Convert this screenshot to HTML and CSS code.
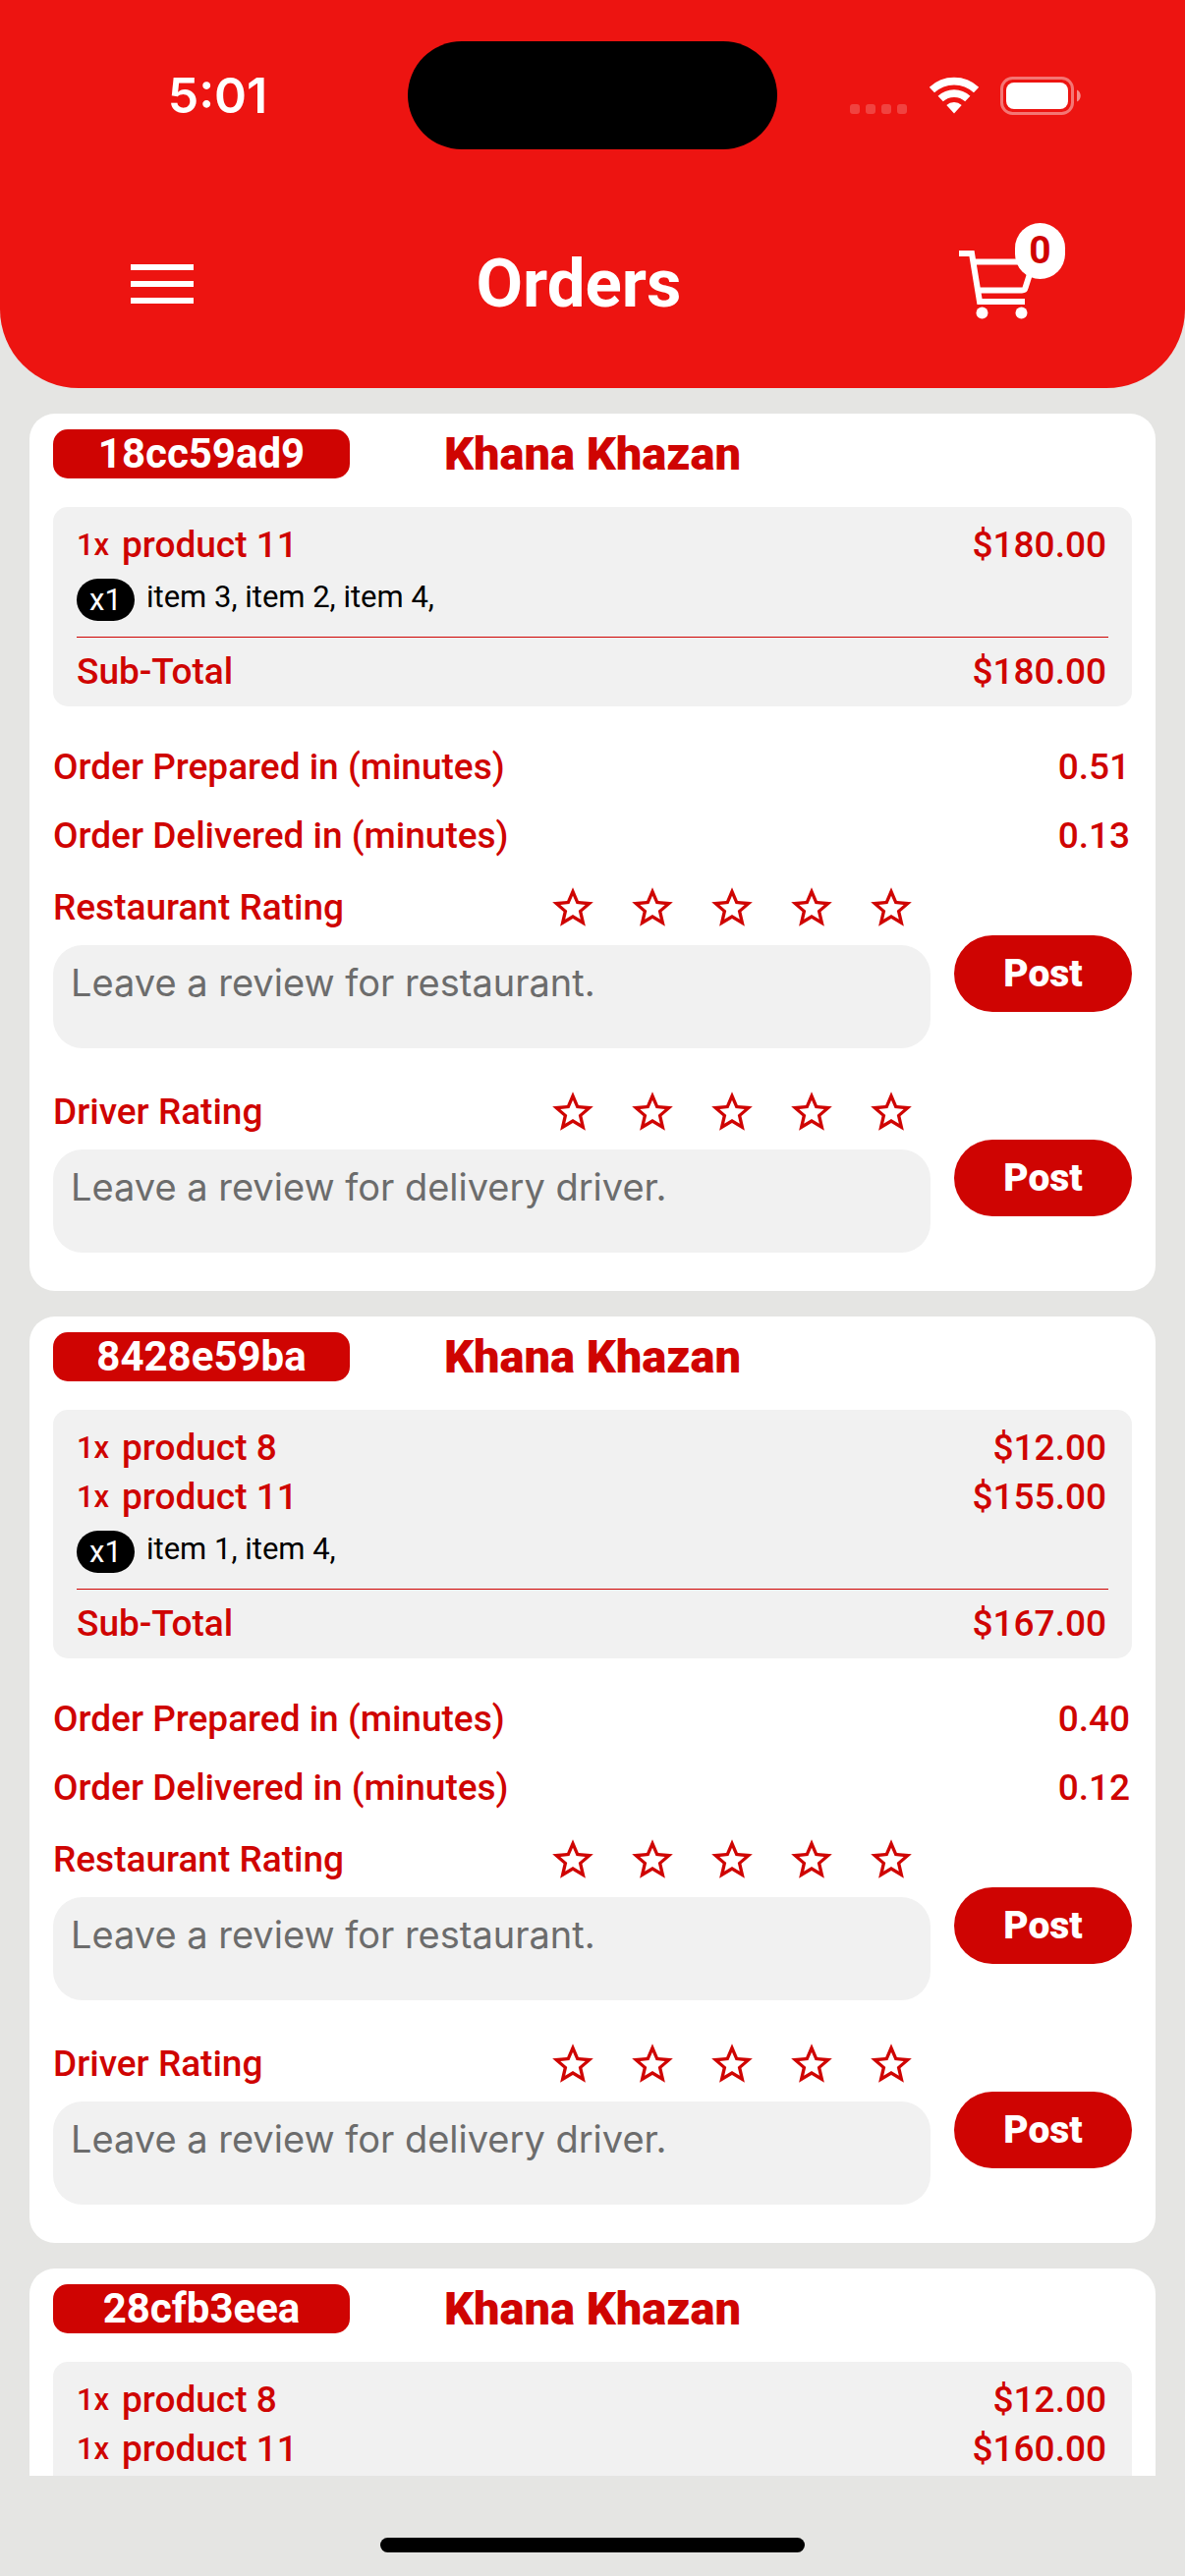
FILE: index.html
```html
<!DOCTYPE html>
<html lang="en">
<head>
<meta charset="utf-8">
<meta name="viewport" content="width=device-width, initial-scale=1">
<title>Orders</title>
<link rel="stylesheet" href="styles.css">
</head>
<body>
<svg width="0" height="0" class="sprite" aria-hidden="true">
  <symbol id="star" viewBox="0 0 24 24"><path d="M12,15.39L8.24,17.66L9.23,13.38L5.91,10.5L10.29,10.13L12,6.09L13.71,10.13L18.09,10.5L14.77,13.38L15.76,17.66M22,9.24L14.81,8.63L12,2L9.19,8.63L2,9.24L7.45,13.97L5.82,21L12,17.27L18.18,21L16.54,13.97L22,9.24Z"/></symbol>
</svg>

<header class="app-header">
  <div class="status-bar">
    <span class="clock">5:01</span>
    <span class="island"></span>
    <span class="indicators">
      <svg width="60" height="40" viewBox="0 0 60 40" fill="#fff" fill-opacity=".2" aria-hidden="true"><rect x="0" y="29" width="10" height="10" rx="3"/><rect x="16" y="29" width="10" height="10" rx="3"/><rect x="32" y="29" width="10" height="10" rx="3"/><rect x="48" y="29" width="10" height="10" rx="3"/></svg>
      <svg width="52" height="40" viewBox="0 0 52 40" aria-hidden="true"><g fill="none" stroke="#fff" stroke-width="7.6"><path d="M3.400 14.600A33 33 0 0 1 48.600 14.600"/><path d="M12.200 23.600A20 20 0 0 1 39.800 23.600"/></g><path d="M18.300 30A11.500 11.500 0 0 1 33.700 30L26 38.500Z" fill="#fff"/></svg>
      <svg width="84" height="40" viewBox="0 0 84 40" aria-hidden="true"><rect x="2.500" y="2.500" width="72" height="36" rx="11" fill="none" stroke="#fff" stroke-opacity=".42" stroke-width="3"/><rect x="7" y="7" width="63" height="27" rx="8" fill="#fff"/><path d="M79 14.500c5 2 5 10 0 12z" fill="#fff" fill-opacity=".5"/></svg>
    </span>
  </div>
  <nav class="toolbar">
    <button class="icon-button menu-button" type="button" aria-label="Menu">
      <svg width="64" height="42" viewBox="0 0 64 42" fill="#fff" aria-hidden="true"><path d="M0 0h64v6H0zM0 17h64v6H0zM0 34h64v6H0z"/></svg>
    </button>
    <h1 class="page-title">Orders</h1>
    <button class="icon-button cart-button" type="button" aria-label="Cart, 0 items">
      <svg width="78" height="70" viewBox="0 0 78 70" fill="none" stroke="#fff" stroke-width="6" aria-hidden="true"><path d="M0 3H13L21 52H67M15 11.500H76L67.500 38Q67 40.500 64 40.500H20"/><g fill="#fff" stroke="none"><circle cx="23.500" cy="63.500" r="6"/><circle cx="63.500" cy="63.500" r="6"/></g></svg>
      <span class="cart-count">0</span>
    </button>
  </nav>
</header>

<main class="orders">
  <article class="order">
    <header class="order-head"><span class="order-id">18cc59ad9</span><h2 class="restaurant">Khana Khazan</h2></header>
    <section class="summary">
      <div class="line"><span class="qty">1x</span><span class="product">product 11</span><span class="price">$180.00</span></div>
      <div class="addons"><span class="addon-qty">x1</span><span class="addon-list">item 3, item 2, item 4,</span></div>
      <div class="subtotal"><span>Sub-Total</span><span>$180.00</span></div>
    </section>
    <dl class="timings">
      <div class="timing"><dt>Order Prepared in (minutes)</dt><dd>0.51</dd></div>
      <div class="timing"><dt>Order Delivered in (minutes)</dt><dd>0.13</dd></div>
    </dl>
    <form class="review">
      <div class="review-main">
        <div class="rating"><label for="r1">Restaurant Rating</label>
          <div class="stars"><button type="button" class="star" aria-label="1 star"><svg><use href="#star"/></svg></button><button type="button" class="star" aria-label="2 stars"><svg><use href="#star"/></svg></button><button type="button" class="star" aria-label="3 stars"><svg><use href="#star"/></svg></button><button type="button" class="star" aria-label="4 stars"><svg><use href="#star"/></svg></button><button type="button" class="star" aria-label="5 stars"><svg><use href="#star"/></svg></button></div>
        </div>
        <textarea id="r1" class="comment" placeholder="Leave a review for restaurant."></textarea>
      </div>
      <button class="post" type="button">Post</button>
    </form>
    <form class="review">
      <div class="review-main">
        <div class="rating"><label for="d1">Driver Rating</label>
          <div class="stars"><button type="button" class="star" aria-label="1 star"><svg><use href="#star"/></svg></button><button type="button" class="star" aria-label="2 stars"><svg><use href="#star"/></svg></button><button type="button" class="star" aria-label="3 stars"><svg><use href="#star"/></svg></button><button type="button" class="star" aria-label="4 stars"><svg><use href="#star"/></svg></button><button type="button" class="star" aria-label="5 stars"><svg><use href="#star"/></svg></button></div>
        </div>
        <textarea id="d1" class="comment" placeholder="Leave a review for delivery driver."></textarea>
      </div>
      <button class="post" type="button">Post</button>
    </form>
  </article>

  <article class="order">
    <header class="order-head"><span class="order-id">8428e59ba</span><h2 class="restaurant">Khana Khazan</h2></header>
    <section class="summary">
      <div class="line"><span class="qty">1x</span><span class="product">product 8</span><span class="price">$12.00</span></div>
      <div class="line"><span class="qty">1x</span><span class="product">product 11</span><span class="price">$155.00</span></div>
      <div class="addons"><span class="addon-qty">x1</span><span class="addon-list">item 1, item 4,</span></div>
      <div class="subtotal"><span>Sub-Total</span><span>$167.00</span></div>
    </section>
    <dl class="timings">
      <div class="timing"><dt>Order Prepared in (minutes)</dt><dd>0.40</dd></div>
      <div class="timing"><dt>Order Delivered in (minutes)</dt><dd>0.12</dd></div>
    </dl>
    <form class="review">
      <div class="review-main">
        <div class="rating"><label for="r2">Restaurant Rating</label>
          <div class="stars"><button type="button" class="star" aria-label="1 star"><svg><use href="#star"/></svg></button><button type="button" class="star" aria-label="2 stars"><svg><use href="#star"/></svg></button><button type="button" class="star" aria-label="3 stars"><svg><use href="#star"/></svg></button><button type="button" class="star" aria-label="4 stars"><svg><use href="#star"/></svg></button><button type="button" class="star" aria-label="5 stars"><svg><use href="#star"/></svg></button></div>
        </div>
        <textarea id="r2" class="comment" placeholder="Leave a review for restaurant."></textarea>
      </div>
      <button class="post" type="button">Post</button>
    </form>
    <form class="review">
      <div class="review-main">
        <div class="rating"><label for="d2">Driver Rating</label>
          <div class="stars"><button type="button" class="star" aria-label="1 star"><svg><use href="#star"/></svg></button><button type="button" class="star" aria-label="2 stars"><svg><use href="#star"/></svg></button><button type="button" class="star" aria-label="3 stars"><svg><use href="#star"/></svg></button><button type="button" class="star" aria-label="4 stars"><svg><use href="#star"/></svg></button><button type="button" class="star" aria-label="5 stars"><svg><use href="#star"/></svg></button></div>
        </div>
        <textarea id="d2" class="comment" placeholder="Leave a review for delivery driver."></textarea>
      </div>
      <button class="post" type="button">Post</button>
    </form>
  </article>

  <article class="order">
    <header class="order-head"><span class="order-id">28cfb3eea</span><h2 class="restaurant">Khana Khazan</h2></header>
    <section class="summary">
      <div class="line"><span class="qty">1x</span><span class="product">product 8</span><span class="price">$12.00</span></div>
      <div class="line"><span class="qty">1x</span><span class="product">product 11</span><span class="price">$160.00</span></div>
    </section>
  </article>
</main>

<footer class="home-area"><span class="home-indicator"></span></footer>
</body>
</html>
```

FILE: styles.css
```css
:root {
  --header: #ed1411;
  --brand: #cf0402;
  --page: #e5e5e3;
  --field: #f1f1f1;
}

* { box-sizing: border-box; }

body {
  margin: 0;
  height: 100vh;
  display: flex;
  flex-direction: column;
  background: var(--page);
  color: var(--brand);
  font: 500 37px/50px Roboto, sans-serif;
}

h1, h2, dl, dd { margin: 0; }

button {
  border: 0;
  padding: 0;
  background: none;
  color: inherit;
  font: inherit;
  cursor: pointer;
}

svg { display: block; }
.sprite { position: absolute; }

/* Header */
.app-header {
  flex: none;
  padding: 42px 0 58px;
  background: var(--header);
  color: #fff;
  border-radius: 0 0 80px 80px;
}

.status-bar {
  display: grid;
  grid-template-columns: 1fr 376px 1fr;
  align-items: center;
}

.clock {
  padding-left: 28px;
  text-align: center;
  font: 600 50px/60px Inter, sans-serif;
}

.island {
  height: 110px;
  border-radius: 55px;
  background: #000;
}

.indicators {
  display: flex;
  gap: 20px;
  padding-left: 74px;
}

.toolbar {
  display: grid;
  grid-template-columns: auto 1fr auto;
  align-items: center;
  margin-top: 75px;
  padding: 0 122px 0 133px;
}

.menu-button { width: 69px; padding-top: 16px; }

.page-title {
  padding-top: 14px;
  text-align: center;
  font-size: 69px;
  line-height: 96px;
  font-weight: 700;
}

.cart-button {
  position: relative;
  width: 108px;
  padding: 28px 0 12px;
}

.cart-count {
  position: absolute;
  top: 0;
  right: 0;
  width: 51px;
  border-radius: 26px;
  background: #fff;
  color: var(--brand);
  font-size: 39px;
  line-height: 57px;
  font-weight: 700;
}

/* Order list */
.orders {
  flex: 1;
  min-height: 0;
  overflow: hidden;
  display: flex;
  flex-direction: column;
  gap: 26px;
  padding: 26px 30px 0;
}

.order {
  flex: none;
  padding: 16px 24px 39px;
  border-radius: 26px;
  background: #fff;
}

.order-head {
  display: grid;
  grid-template-columns: 302px 1fr;
  column-gap: 96px;
}

.order-id {
  border-radius: 15px;
  background: var(--brand);
  color: #fff;
  text-align: center;
  font-size: 42px;
  font-weight: 700;
}

.restaurant {
  font-size: 47px;
  line-height: 50px;
  font-weight: 900;
}

.summary {
  margin-top: 29px;
  padding: 14px 24px 0;
  border-radius: 15px;
  background: var(--field);
}

.summary:last-child { padding-bottom: 48px; }

.line {
  display: flex;
  align-items: center;
}

.qty {
  width: 46px;
  font-size: 31px;
}

.product { flex: 1; }
.price { padding-right: 2px; }

.addons {
  display: flex;
  gap: 12px;
  margin: 9px 0 16px;
  color: #000;
  font-size: 31px;
  line-height: 37px;
  font-weight: 400;
}

.addon-qty {
  width: 59px;
  border-radius: 22px;
  background: #000;
  color: #fff;
  text-align: center;
  line-height: 43px;
}

.subtotal {
  display: flex;
  justify-content: space-between;
  padding-right: 2px;
  border-top: 1px solid var(--brand);
  line-height: 70px;
}

.timings { margin: 27px 0 13px; }

.timing {
  display: flex;
  justify-content: space-between;
  padding-right: 2px;
  line-height: 70px;
}

/* Reviews */
.review {
  display: flex;
  align-items: flex-start;
  gap: 24px;
}

.review + .review { margin-top: 40px; }
.review-main { flex: 1; }

.rating {
  display: flex;
  justify-content: space-between;
  padding-right: 15px;
}

.stars { display: flex; gap: 31px; }

.star svg {
  width: 50px;
  height: 50px;
  fill: var(--brand);
}

.comment {
  display: block;
  width: 100%;
  height: 105px;
  margin-top: 13px;
  padding: 13px 18px;
  border: 0;
  border-radius: 30px;
  background: var(--field);
  color: #000;
  resize: none;
  overflow: hidden;
  font: 400 38px/50px Inter, sans-serif;
}

.comment::placeholder { color: #6c6c6c; }

.post {
  width: 181px;
  margin-top: 53px;
  border-radius: 39px;
  background: var(--brand);
  color: #fff;
  font-size: 39px;
  line-height: 78px;
  font-weight: 900;
}

/* Home indicator */
.home-area {
  flex: none;
  display: flex;
  justify-content: center;
  padding: 63px 0 24px;
}

.home-indicator {
  width: 432px;
  height: 15px;
  border-radius: 8px;
  background: #000;
}
```
